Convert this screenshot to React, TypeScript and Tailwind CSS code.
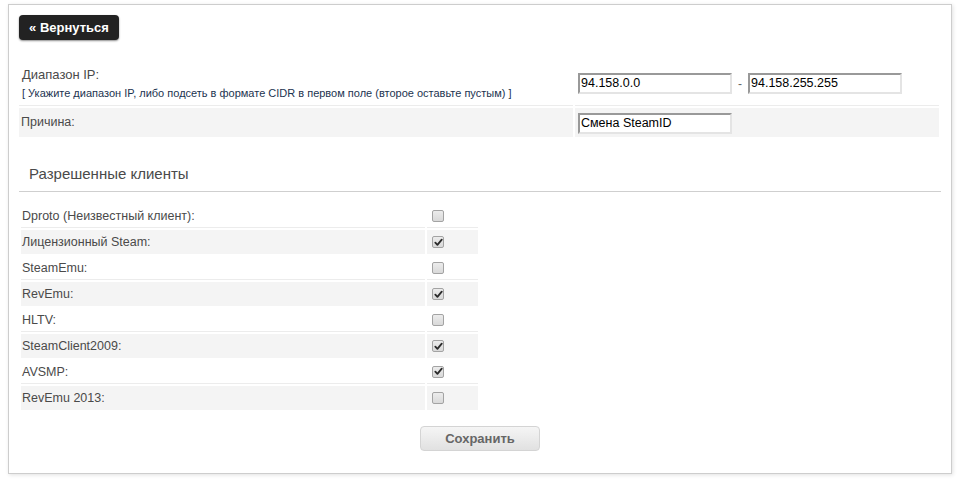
import React from 'react'

const clients: [string, boolean][] = [
  ['Dproto (Неизвестный клиент):', false],
  ['Лицензионный Steam:', true],
  ['SteamEmu:', false],
  ['RevEmu:', true],
  ['HLTV:', false],
  ['SteamClient2009:', true],
  ['AVSMP:', true],
  ['RevEmu 2013:', false],
]

function Check({ checked }: { checked: boolean }) {
  return (
    <span className="flex h-[12px] w-[12px] items-center justify-center rounded-[2px] border border-[#a3a3a3] bg-gradient-to-b from-[#ececec] to-[#d9d9d9]">
      {checked && (
        <svg viewBox="0 0 10 10" className="h-[9px] w-[9px]">
          <path d="M1.5 5.2 L3.8 7.6 L8.6 1.8" fill="none" stroke="#2b2b2b" strokeWidth="2" strokeLinecap="round" strokeLinejoin="round" />
        </svg>
      )}
    </span>
  )
}

function Field({ value }: { value: string }) {
  return (
    <div className="flex h-[21px] w-[154px] items-center border-t-2 border-l-2 border-r-2 border-b-2 border-t-[#999] border-l-[#999] border-r-[#e4e4e4] border-b-[#e4e4e4] bg-white pl-[1px] text-[12.5px] text-black">
      {value}
    </div>
  )
}

export default function App() {
  return (
    <div className="h-[486px] w-[970px] bg-white pl-[8px] pt-[4px] font-['Liberation_Sans',Arial,sans-serif]">
      <div className="h-[470px] w-[944px] border border-[#cdcdcd] bg-white px-[10px] pt-[10px] shadow-[1px_1px_4px_rgba(0,0,0,0.12)]">
        {/* back */}
        <button className="flex h-[25px] w-[100px] items-center justify-center rounded-[4px] bg-[#222] text-[13px] font-bold text-white shadow-[0_1px_2px_rgba(0,0,0,0.45)]">
          « Вернуться
        </button>

        {/* ip range */}
        <div className="mt-[21px] flex gap-[2px]">
          <div className="flex h-[45px] w-[554px] flex-col justify-center border-b border-[#ececec] pl-[3px] pb-[1px]">
            <div className="text-[13px] leading-[18px] text-[#4a4a4a]">Диапазон IP:</div>
            <div className="mt-[3px] text-[11px] leading-[13px] text-[#1c3350]">
              [ Укажите диапазон IP, либо подсеть в формате CIDR в первом поле (второе оставьте пустым) ]
            </div>
          </div>
          <div className="flex h-[45px] w-[364px] items-center border-b border-[#ececec] pl-[3px] pt-[1px]">
            <Field value="94.158.0.0" />
            <span className="mx-[6px] text-[12px] text-[#666]">-</span>
            <Field value="94.158.255.255" />
          </div>
        </div>

        {/* reason */}
        <div className="mt-[2px] flex gap-[2px]">
          <div className="flex h-[29px] w-[554px] items-center bg-[#f4f4f4] pl-[2px] text-[12.5px] text-[#4a4a4a]">Причина:</div>
          <div className="flex h-[29px] w-[364px] items-center bg-[#f4f4f4] pl-[3px] pt-[1px]">
            <Field value="Смена SteamID" />
          </div>
        </div>

        {/* clients */}
        <div className="mt-[27px] border-b border-[#cfcfcf] pb-[7px] pl-[10px] text-[15px] leading-[20px] text-[#4a4a4a]">
          Разрешенные клиенты
        </div>

        <div className="mt-[12px] flex flex-col gap-[2px] pl-[2px]">
          {clients.map(([name, on], i) => {
            const grey = i % 2 === 1
            return (
              <div key={name} className="flex gap-[2px]">
                <div
                  className={
                    grey
                      ? 'flex h-[24px] w-[404px] items-center bg-[#f4f4f4] pl-[1px] text-[12.5px] text-[#4a4a4a]'
                      : 'flex h-[24px] w-[404px] items-center border-b border-[#ececec] pl-[1px] pt-[1px] text-[12.5px] text-[#4a4a4a]'
                  }
                >
                  {name}
                </div>
                <div
                  className={
                    grey
                      ? 'flex h-[24px] w-[51px] items-center bg-[#f4f4f4] pl-[5px]'
                      : 'flex h-[24px] w-[51px] items-center border-b border-[#ececec] pl-[5px]'
                  }
                >
                  <Check checked={on} />
                </div>
              </div>
            )
          })}
        </div>

        <div className="mt-[16px] flex justify-center">
          <button className="h-[25px] w-[120px] rounded-[4px] border border-[#d4d4d4] bg-gradient-to-b from-[#f5f5f5] to-[#e1e1e1] text-[13px] font-bold text-[#666]">
            Сохранить
          </button>
        </div>
      </div>
    </div>
  )
}
